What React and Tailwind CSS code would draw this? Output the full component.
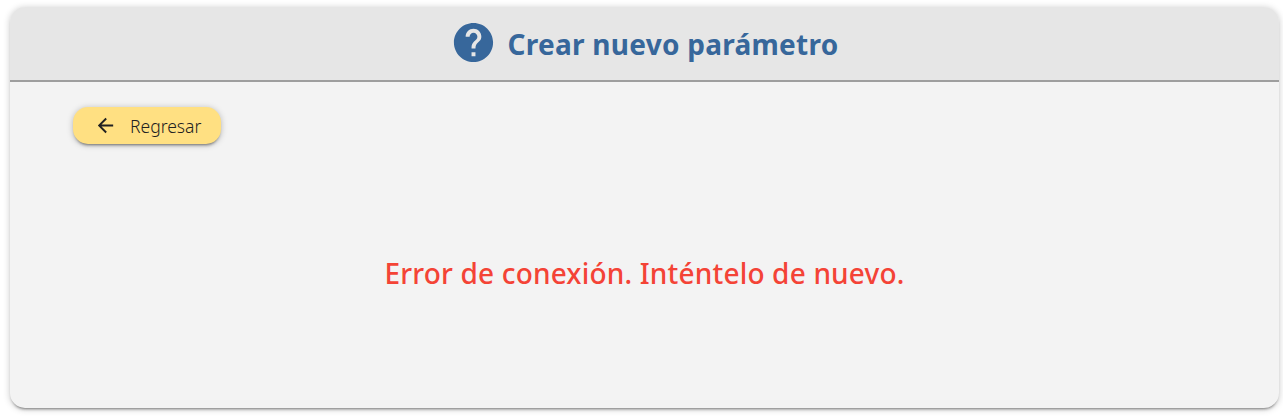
import { MdHelp, MdArrowBack } from "react-icons/md";

export default function App() {
  return (
    <main className="h-[417px] bg-white pt-[7px] pr-[4px] pb-[9px] pl-[10px] font-['Noto_Sans',sans-serif]">
      <section className="flex h-full flex-col overflow-hidden rounded-[15px] bg-[#f3f3f3] shadow-[0_3px_3px_-2px_rgba(0,0,0,0.45),0_1px_7px_rgba(0,0,0,0.22)]">
        <header className="flex h-[75px] shrink-0 items-center justify-center border-b-2 border-[#9e9e9e] bg-[#e6e6e6] text-[#37679b]">
          <MdHelp className="mr-[10px] mb-[2px] size-[47px]" />
          <h1 className="text-[28px] font-bold tracking-[0.27px] whitespace-nowrap">Crear nuevo parámetro</h1>
        </header>
        <div className="pt-[25px] pl-[63px]">
          <button className="flex h-[37px] w-[148px] items-center rounded-[15px] bg-[#ffe082] pl-[21px] text-[#212121] shadow-[0_3px_3px_-2px_rgba(0,0,0,0.45),0_1px_6px_rgba(0,0,0,0.25)]">
            <MdArrowBack className="mr-[13px] mb-px size-[23px]" />
            <span className="mt-px text-[17.5px] font-light">Regresar</span>
          </button>
        </div>
        <p className="mt-[108px] text-center text-[28px] font-medium tracking-[0.18px] text-[#f44336]">Error de conexión. Inténtelo de nuevo.</p>
      </section>
    </main>
  );
}
